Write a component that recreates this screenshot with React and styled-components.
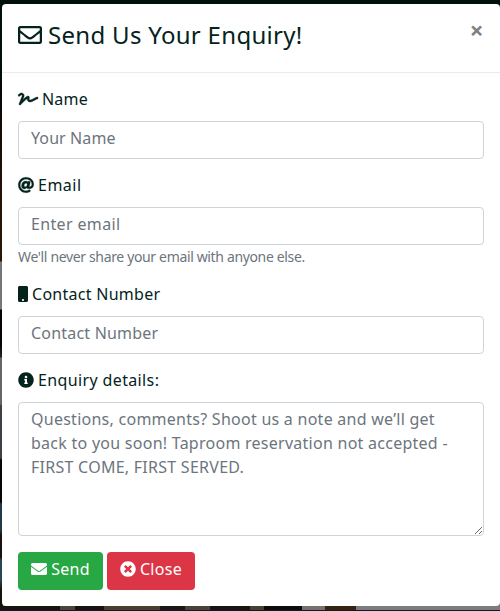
import React from "react";
import styled, { createGlobalStyle } from "styled-components";
import {
  FaRegEnvelope, FaSignature, FaAt, FaMobile, FaInfoCircle, FaEnvelope, FaTimesCircle,
} from "react-icons/fa";

const GlobalStyle = createGlobalStyle`
  *, *::before, *::after { box-sizing: border-box; }
  body {
    margin: 0;
    overflow: hidden;
    font: 400 16px/24px "Noto Sans", "Open Sans", sans-serif;
    color: #04231d;
  }
  svg { display: block; flex: none; }
`;

const Backdrop = styled.div`
  height: 611px;
  padding: 4px 0 5px 2px;
  background:
    linear-gradient(#11182f, #11182f) 0 610px / 500px 1px no-repeat,
    linear-gradient(90deg, #17130d 0 60px, #4a443b 60px 75px, #17130f 75px 104px, #4c3e2d 104px 160px, #1b1813 160px 185px, #494239 185px 210px, #17150f 210px 250px, #49402f 250px 264px, #0b0e08 264px 302px, #77716b 302px 325px, #33230f 325px 356px, #7c7c7c 356px) 0 606px / 500px 4px no-repeat,
    linear-gradient(#00110d 0 60px, #080604 90px, #211005 180px, #2b1705 261px, #777 262px 309px, #090307 310px 345px, #1b2731 357px, #666 358px 404px, #3c4148 406px 458px, #090502 460px 502px, #213a43 504px 530px, #16130f 535px 557px, #294651 560px 580px, #17110b 590px) 0 0 / 3px 606px no-repeat,
    linear-gradient(#00110d 0 590px, #777 591px);
`;

const Dialog = styled.section`
  width: 498px;
  height: 602px;
  background: #fff;
  border-radius: 4px;
`;

const Header = styled.header`
  display: flex;
  justify-content: space-between;
  height: 69px;
  padding: 13px 16px 0;
  border-bottom: 1px solid #e9ecef;
`;

const Title = styled.h4`
  display: flex;
  align-items: center;
  gap: 6px;
  height: 36px;
  margin: 0;
  font-size: 24px;
  font-weight: 400;
  letter-spacing: ${(p) => p.$track}px;
  white-space: nowrap;
`;

const Dismiss = styled.button`
  width: 15px;
  height: 26px;
  padding: 0;
  border: 0;
  background: none;
  color: #808080;
  font: 700 24px/26px "Noto Sans", sans-serif;
`;

const Form = styled.form`
  padding: 16px;
`;

const Field = styled.div`
  margin-bottom: 16px;
`;

const Label = styled.label`
  display: flex;
  align-items: center;
  gap: 4px;
  height: 24px;
  margin-bottom: 8px;
  padding-bottom: 4px;
  letter-spacing: ${(p) => p.$track || 0}px;
`;

const Input = styled.input`
  display: block;
  width: 100%;
  height: 38px;
  padding: 4px 12px 8px;
  border: 1px solid #ced4da;
  border-radius: 4px;
  background: #fff;
  font: inherit;
  letter-spacing: ${(p) => p.$track || 0}px;
  &::placeholder { color: #6c757d; opacity: 1; }
`;

const TextArea = styled(Input).attrs({ as: "textarea" })`
  height: 134px;
  overflow: hidden;
  resize: vertical;
`;

const Hint = styled.small`
  display: block;
  height: 19px;
  margin-top: 4px;
  color: #6c757d;
  font-size: 14px;
  line-height: 15px;
  letter-spacing: ${(p) => p.$track}px;
  white-space: nowrap;
`;

const Actions = styled.div`
  display: flex;
  gap: 4px;
`;

const Button = styled.button`
  display: flex;
  align-items: center;
  justify-content: center;
  gap: 4px;
  width: ${(p) => p.$width}px;
  height: 38px;
  padding: 0 0 4px;
  border: 0;
  border-radius: 4px;
  background: ${(p) => p.$fill};
  color: #fff;
  font: inherit;
  letter-spacing: 0.3px;
`;

const Glyph = styled.svg`
  width: ${(p) => p.$w}px;
  height: ${(p) => p.$h || 16}px;
  overflow: visible;
  path { stroke-width: ${(p) => p.$bold || 0}px; }
`;

const note =
  "Questions, comments? Shoot us a note and we’ll get\nback to you soon! Taproom reservation not accepted -\nFIRST COME, FIRST SERVED.";

export default function App() {
  return (
    <>
      <GlobalStyle />
      <Backdrop>
        <Dialog>
          <Header>
            <Title $track={0.3}>
              <Glyph as={FaRegEnvelope} $w={24} $h={24} />
              Send Us Your Enquiry!
            </Title>
            <Dismiss type="button" aria-label="Dismiss">×</Dismiss>
          </Header>
          <Form>
            <Field>
              <Label $track={0.2}><Glyph as={FaSignature} $w={20} $bold={12} />Name</Label>
              <Input placeholder="Your Name" $track={0.1} />
            </Field>
            <Field>
              <Label $track={0.5}><Glyph as={FaAt} $w={16} $bold={8} />Email</Label>
              <Input placeholder="Enter email" $track={0.35} />
              <Hint $track={-0.35}>We'll never share your email with anyone else.</Hint>
            </Field>
            <Field>
              <Label $track={0.27}><Glyph as={FaMobile} $w={10} />Contact Number</Label>
              <Input placeholder="Contact Number" $track={0.2} />
            </Field>
            <Field>
              <Label $track={0.37}><Glyph as={FaInfoCircle} $w={16} />Enquiry details:</Label>
              <TextArea placeholder={note} $track={0.26} />
            </Field>
            <Actions>
              <Button type="button" $width={85} $fill="#28a745"><Glyph as={FaEnvelope} $w={16} />Send</Button>
              <Button type="button" $width={88} $fill="#dc3545"><Glyph as={FaTimesCircle} $w={16} />Close</Button>
            </Actions>
          </Form>
        </Dialog>
      </Backdrop>
    </>
  );
}
